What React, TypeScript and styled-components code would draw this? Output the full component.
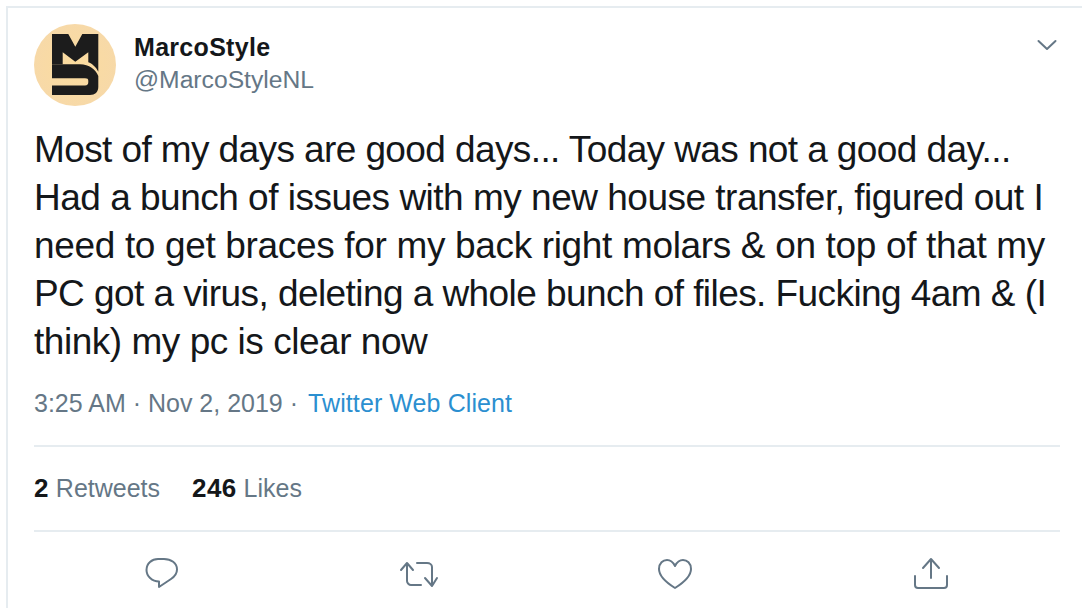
import styled, { createGlobalStyle } from "styled-components";

const GlobalStyle = createGlobalStyle`
  html, body {
    margin: 0;
    padding: 0;
    background: #fff;
  }
  body {
    font-family: "Liberation Sans", Arial, sans-serif;
    color: #14171a;
  }
`

const Page = styled.div`
  width: 1082px;
  height: 608px;
  box-sizing: border-box;
  padding: 6px 0 0 6px;
  overflow: hidden;
`

const Card = styled.article`
  height: 602px;
  box-sizing: border-box;
  border-top: 2px solid #e6ecf0;
  border-left: 2px solid #e6ecf0;
  padding: 16px 22px 0 26px;
`

const Header = styled.header`
  display: flex;
  align-items: center;
  height: 82px;
`

const Avatar = styled.svg`
  width: 82px;
  height: 82px;
  flex: none;
`

const Names = styled.div`
  display: flex;
  flex-direction: column;
  margin-left: 18px;
  margin-bottom: 4px;
  flex: 1;
`

const DisplayName = styled.div`
  font-size: 25px;
  line-height: 32px;
  font-weight: 700;
  letter-spacing: 0.3px;
`

const Handle = styled.div`
  font-size: 24.7px;
  line-height: 33px;
  color: #657786;
`

const Caret = styled.svg`
  width: 24px;
  height: 24px;
  align-self: flex-start;
  margin: 10px 1px 0 0;
  fill: none;
  stroke: #657786;
  stroke-width: 2;
  stroke-linecap: round;
  stroke-linejoin: round;
`

const TweetText = styled.div`
  margin-top: 20px;
  font-size: 37px;
  line-height: 48px;
`

const TextLine = styled.div<{ $spacing: number }>`
  letter-spacing: ${props => props.$spacing}px;
  white-space: pre;
`

const Meta = styled.div`
  margin-top: 21px;
  font-size: 25px;
  line-height: 32px;
  color: #657786;
  white-space: pre;
`

const SourceLink = styled.a`
  margin-left: 3px;
  color: #2b8fd0;
  letter-spacing: 0.1px;
  text-decoration: none;
`

const Stats = styled.div`
  display: flex;
  gap: 32px;
  align-items: center;
  height: 82px;
  margin-top: 26px;
  padding-bottom: 1px;
  box-sizing: content-box;
  border-top: 2px solid #e6ecf0;
  border-bottom: 2px solid #e6ecf0;
  font-size: 25px;
  color: #657786;
`

const Count = styled.b`
  font-size: 26px;
  letter-spacing: 0.4px;
  color: #14171a;
`

const Actions = styled.div`
  display: grid;
  grid-template-columns: repeat(4, 256px);
  padding: 24px 0 0 110px;
`

const ActionIcon = styled.svg`
  display: block;
  width: 36px;
  height: 36px;
  overflow: visible;
  fill: none;
  stroke: #657786;
  stroke-width: 2;
  stroke-linecap: round;
  stroke-linejoin: round;
`

const lines = [
  { text: "Most of my days are good days... Today was not a good day...", spacing: -0.6 },
  { text: "Had a bunch of issues with my new house transfer, figured out I", spacing: -0.5 },
  { text: "need to get braces for my back right molars & on top of that my", spacing: -0.34 },
  { text: "PC got a virus, deleting a whole bunch of files. Fucking 4am & (I", spacing: -0.565 },
  { text: "think) my pc is clear now", spacing: -0.47 },
]

export default function App() {
  return (
    <Page>
      <GlobalStyle />
      <Card>
        <Header>
          <Avatar viewBox="0 0 82 82">
            <defs>
              <radialGradient id="avatarFill">
                <stop offset="0%" stopColor="#fbdc9e" />
                <stop offset="100%" stopColor="#f7d9a8" />
              </radialGradient>
            </defs>
            <circle cx="41" cy="41" r="41" fill="url(#avatarFill)" />
            <path
              fill="#1c1c1c"
              d="M18 10H34.3L41.3 22.7L48.3 10H64.3V47.7C62 43 58 39.5 54.3 38.3V28.3L41.3 37.7L28.7 28.3V40.3H18Z"
            />
            <path
              fill="#1c1c1c"
              d="M18 40.3H46C55 40.3 62 46 64.3 52V63C64.3 68 61 71 56 71H18V61.5H51C53.5 61.5 54.3 60 54.3 58V57C54.3 55 53.5 54.3 51 54.3H18Z"
            />
          </Avatar>
          <Names>
            <DisplayName>MarcoStyle</DisplayName>
            <Handle>@MarcoStyleNL</Handle>
          </Names>
          <Caret viewBox="0 0 24 24">
            <path d="M3.5 7L12 15L20.5 7" />
          </Caret>
        </Header>
        <TweetText>
          {lines.map(line => (
            <TextLine key={line.text} $spacing={line.spacing}>{line.text}</TextLine>
          ))}
        </TweetText>
        <Meta>
          3:25 AM · Nov 2, 2019 · <SourceLink href="#">Twitter Web Client</SourceLink>
        </Meta>
        <Stats>
          <span><Count>2</Count> Retweets</span>
          <span><Count>246</Count> Likes</span>
        </Stats>
        <Actions>
          <ActionIcon viewBox="0 0 36 36">
            <path d="M14 3H20C27 3 33 7 33 13.5C33 18 30 21 27 23L15 31V25.5C8 25.5 2.5 20 2.5 14C2.5 7.5 8 3 14 3Z" />
          </ActionIcon>
          <ActionIcon viewBox="0 0 36 36">
            <path d="M1 14L7 7L13 14M7 8V25C7 27 9 29 11 29H21M17 7H27C30 7 32 9 32 11V29M25 22L32 30L37 22" />
          </ActionIcon>
          <ActionIcon viewBox="0 0 36 36">
            <path d="M19 10C17 6 14 4 11 4C7 4 3 7 3 13C3 21 11 27 19 32C27 27 35 21 35 13C35 7 31 4 27 4C24 4 21 6 19 10Z" />
          </ActionIcon>
          <ActionIcon viewBox="0 0 36 36">
            <path d="M11 12L19 3L27 12M19 4V22M3 20V29C3 31 4 32 6 32H32C34 32 35 31 35 29V20" />
          </ActionIcon>
        </Actions>
      </Card>
    </Page>
  )
}
